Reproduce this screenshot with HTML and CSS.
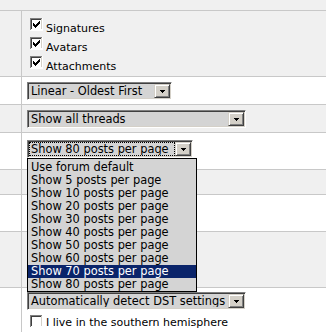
FILE: index.html
```html
<!DOCTYPE html>
<html lang="en">
<head>
    <meta charset="UTF-8">
    <title>Thread display options</title>
    <link rel="stylesheet" href="styles.css">
</head>
<body>
    <svg class="defs" width="0" height="0">
        <symbol id="box" viewBox="0 0 13 13">
            <rect width="13" height="13" fill="#fff"/>
            <path d="M0 0h12v1H1v11H0z" fill="#808080"/>
            <path d="M1 1h10v1H2v9H1z" fill="#404040"/>
            <path d="M1 11h11V1h-1v10H1z" fill="#d4d0c8"/>
        </symbol>
        <symbol id="tick" viewBox="0 0 13 13">
            <rect x="9" y="3" width="1" height="1"/>
            <rect x="8" y="4" width="2" height="1"/>
            <rect x="3" y="5" width="1" height="1"/>
            <rect x="7" y="5" width="3" height="1"/>
            <rect x="3" y="6" width="2" height="1"/>
            <rect x="6" y="6" width="3" height="1"/>
            <rect x="3" y="7" width="5" height="1"/>
            <rect x="4" y="8" width="3" height="1"/>
            <rect x="5" y="9" width="1" height="1"/>
        </symbol>
        <symbol id="down" viewBox="0 0 5 3">
            <path d="M0 0h5v1H4v1H3v1H2V2H1V1H0z"/>
        </symbol>
    </svg>

    <div class="prefs">
        <div class="row grey top"></div>

        <!-- post elements -->
        <div class="row grey r-checks">
            <div class="label"></div>
            <div class="field pad-checks">
                <div class="check">
                    <svg class="box" width="13" height="13"><use href="#box"/><use href="#tick"/></svg>
                    <span class="check-text">Signatures</span>
                </div>
                <div class="check">
                    <svg class="box" width="13" height="13"><use href="#box"/><use href="#tick"/></svg>
                    <span class="check-text">Avatars</span>
                </div>
                <div class="check">
                    <svg class="box" width="13" height="13"><use href="#box"/><use href="#tick"/></svg>
                    <span class="check-text">Attachments</span>
                </div>
            </div>
        </div>

        <!-- thread display mode -->
        <div class="row white r-select">
            <div class="label"></div>
            <div class="field pad-select">
                <div class="select w-linear">
                    <span class="select-text">Linear - Oldest First</span>
                    <span class="arrow"><svg width="5" height="3"><use href="#down"/></svg></span>
                </div>
            </div>
        </div>

        <div class="row grey r-select">
            <div class="label"></div>
            <div class="field pad-select">
                <div class="select w-wide">
                    <span class="select-text">Show all threads</span>
                    <span class="arrow"><svg width="5" height="3"><use href="#down"/></svg></span>
                </div>
            </div>
        </div>

        <!-- posts per page, opened -->
        <div class="row white r-tall">
            <div class="label"></div>
            <div class="field pad-open">
                <div class="select w-posts">
                    <span class="select-text focus">Show 80 posts per page</span>
                    <span class="arrow"><svg width="5" height="3"><use href="#down"/></svg></span>
                    <div class="list">
                        <div class="item">Use forum default</div>
                        <div class="item">Show 5 posts per page</div>
                        <div class="item">Show 10 posts per page</div>
                        <div class="item">Show 20 posts per page</div>
                        <div class="item">Show 30 posts per page</div>
                        <div class="item">Show 40 posts per page</div>
                        <div class="item">Show 50 posts per page</div>
                        <div class="item">Show 60 posts per page</div>
                        <div class="item on">Show 70 posts per page</div>
                        <div class="item">Show 80 posts per page</div>
                    </div>
                </div>
            </div>
        </div>

        <div class="row grey r-short">
            <div class="label"></div>
            <div class="field"></div>
        </div>

        <div class="row white r-tall">
            <div class="label"></div>
            <div class="field"></div>
        </div>

        <div class="row grey r-mid">
            <div class="label"></div>
            <div class="field"></div>
        </div>

        <!-- time zone -->
        <div class="row white r-last">
            <div class="label"></div>
            <div class="field pad-dst">
                <div class="select w-wide">
                    <span class="select-text">Automatically detect DST settings</span>
                    <span class="arrow"><svg width="5" height="3"><use href="#down"/></svg></span>
                </div>
                <div class="check check-south">
                    <svg class="box" width="13" height="13"><use href="#box"/></svg>
                    <span class="check-text">I live in the southern hemisphere</span>
                </div>
            </div>
        </div>
    </div>
</body>
</html>
```

FILE: styles.css
```css
/* preference rows */
body {
    margin: 0;
    font-family: "DejaVu Sans", Verdana, sans-serif;
    color: #000;
    background-color: #fff;
}

.defs {
    position: absolute;
    width: 0;
    height: 0;
}

.prefs {
    width: 326px;
    height: 332px;
    overflow: hidden;
}

.row {
    display: flex;
    box-sizing: border-box;
    border-bottom: 1px solid #c8c8c8;
}

.grey {
    background-color: #f0f0f0;
}

.white {
    background-color: #fff;
}

.top {
    height: 11px;
}

.r-checks {
    height: 66px;
}

.r-select {
    height: 28px;
}

.r-tall {
    height: 37px;
}

.r-short {
    height: 25px;
}

.r-mid {
    height: 56px;
}

.r-last {
    height: 60px;
    border-bottom: none;
}

.label {
    width: 21px;
    flex-shrink: 0;
    border-right: 1px solid #c8c8c8;
}

.field {
    flex: 1;
    padding-left: 5px;
}

.pad-checks {
    padding-top: 7px;
}

.pad-select {
    padding-top: 5px;
}

.pad-open {
    padding-top: 7px;
}

.pad-dst {
    padding-top: 4px;
}

/* checkboxes */
.check {
    display: flex;
    align-items: flex-start;
    height: 19px;
    font-size: 11px;
    line-height: 13px;
}

.box {
    display: block;
    margin-left: 3px;
    flex-shrink: 0;
    shape-rendering: crispEdges;
}

.check-text {
    margin-top: 4px;
    margin-left: 3px;
    white-space: nowrap;
}

.check-south {
    margin-top: 5px;
}

.check-south .check-text {
    margin-top: 1px;
}

/* closed select boxes */
.select {
    position: relative;
    display: flex;
    box-sizing: border-box;
    height: 18px;
    background-color: #d4d4d4;
    border: 1px solid;
    border-color: #808080 #fff #fff #808080;
    box-shadow: inset 1px 1px #404040, inset -1px -1px #d4d0c8;
    padding: 1px;
    font-size: 11.4px;
}

.w-linear {
    width: 145px;
}

.w-wide {
    width: 219px;
}

.w-posts {
    width: 166px;
}

.select-text {
    flex: 1;
    height: 14px;
    box-sizing: border-box;
    border: 1px solid transparent;
    padding-left: 1px;
    line-height: 12px;
    white-space: nowrap;
    overflow: hidden;
}

.select-text.focus {
    border: 1px dotted #000;
}

.arrow {
    display: flex;
    align-items: center;
    justify-content: center;
    width: 16px;
    height: 14px;
    box-sizing: border-box;
    flex-shrink: 0;
    background-color: #d4d0c8;
    border: 1px solid;
    border-color: #d4d0c8 #404040 #404040 #d4d0c8;
    box-shadow: inset 1px 1px #fff, inset -1px -1px #808080;
}

.arrow svg {
    display: block;
    shape-rendering: crispEdges;
}

/* opened list */
.list {
    position: absolute;
    top: 17px;
    left: -1px;
    z-index: 2;
    width: 170px;
    box-sizing: border-box;
    padding-top: 2px;
    border: 1px solid #000;
    background-color: #d4d4d4;
}

.item {
    height: 13px;
    line-height: 13px;
    padding-left: 3px;
    white-space: nowrap;
}

.item.on {
    background-color: #0a246a;
    color: #fff;
}
```
